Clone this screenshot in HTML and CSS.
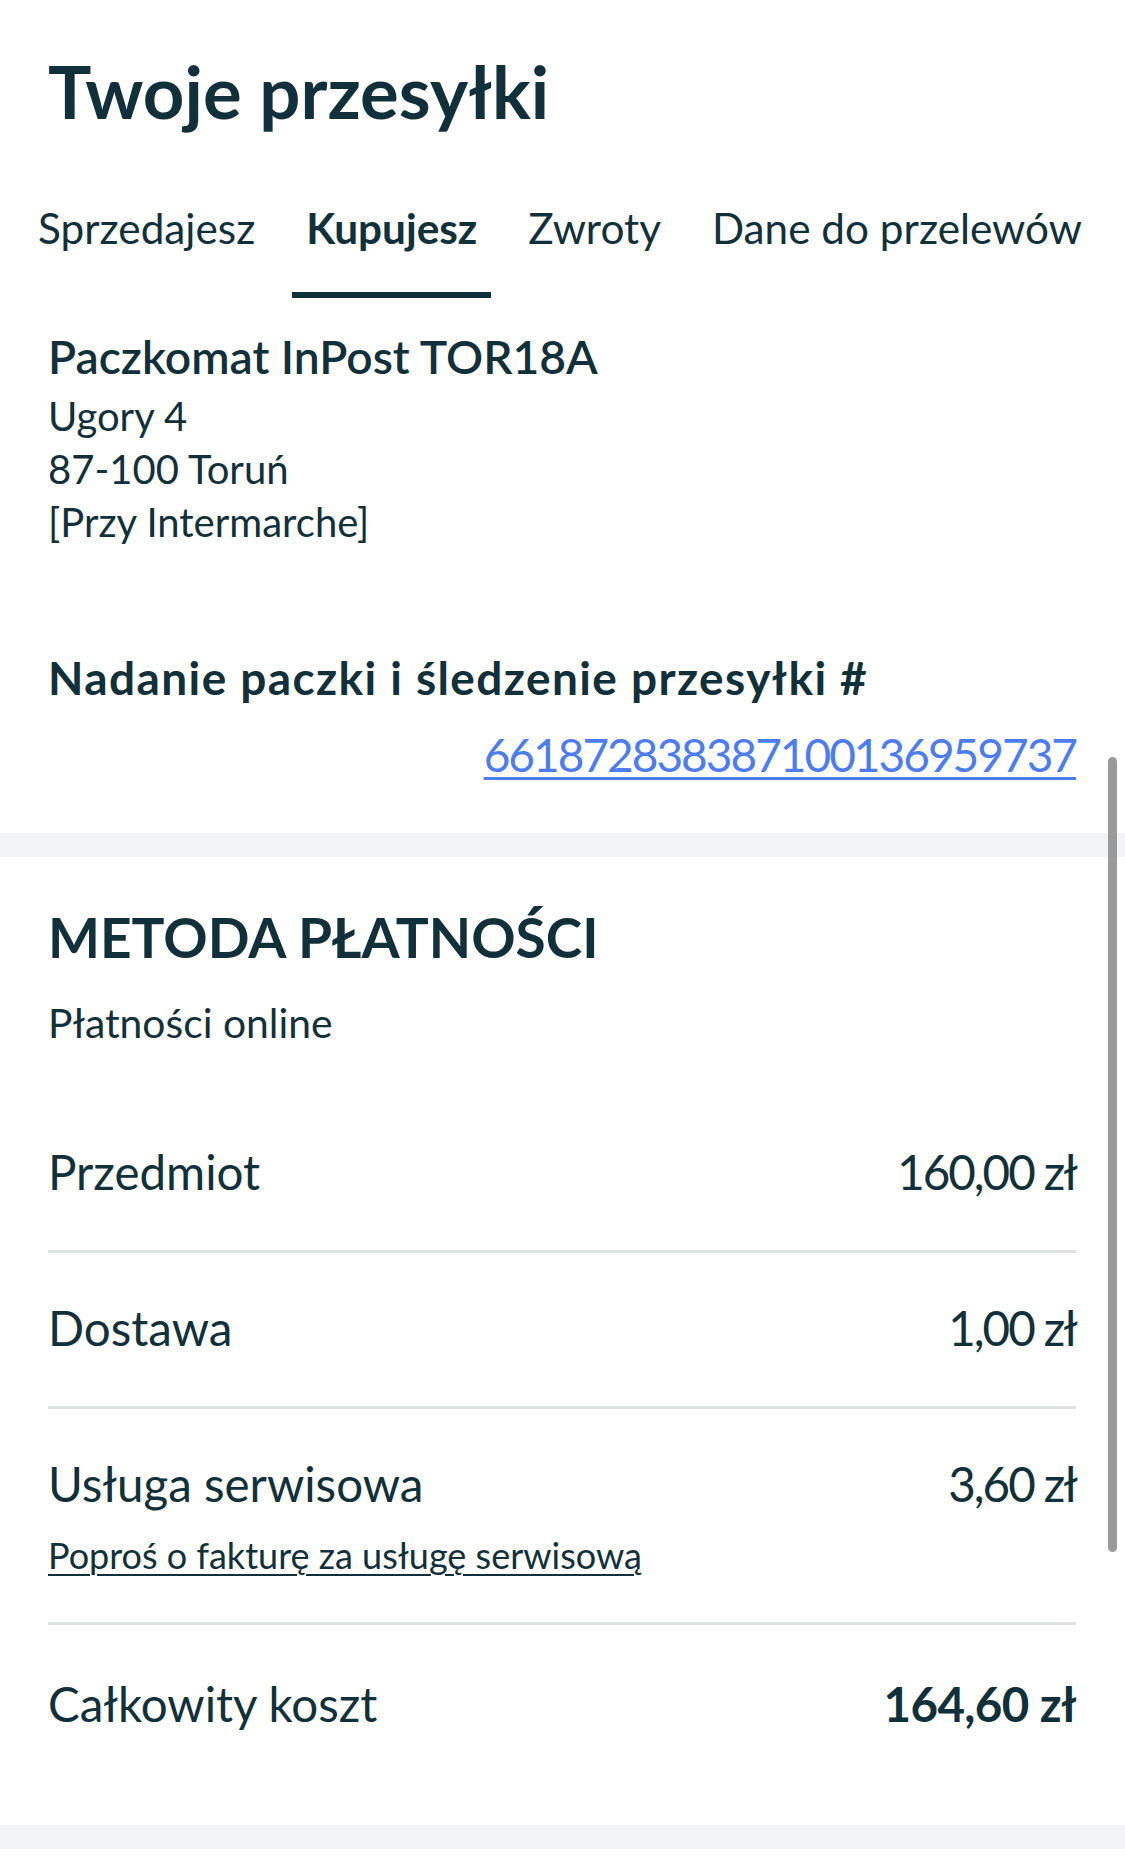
FILE: index.html
```html
<!DOCTYPE html>
<html lang="pl">
<head>
<meta charset="utf-8">
<title>Twoje przesyłki</title>
<link rel="stylesheet" href="styles.css">
</head>
<body>
<div class="screen">
  <header class="header">
    <h1 class="title">Twoje przesyłki</h1>
  </header>
  <nav class="tabs">
    <span class="tab">Sprzedajesz</span>
    <span class="tab tab-active">Kupujesz</span>
    <span class="tab">Zwroty</span>
    <span class="tab">Dane do przelewów</span>
  </nav>

  <section class="section">
    <div class="point-name">Paczkomat InPost TOR18A</div>
    <div class="address">
      <div>Ugory 4</div>
      <div>87-100 Toruń</div>
      <div>[Przy Intermarche]</div>
    </div>
    <div class="tracking-label">Nadanie paczki i śledzenie przesyłki #</div>
    <div class="tracking-row"><a class="tracking-link" href="#">661872838387100136959737</a></div>
  </section>

  <div class="band"></div>

  <section class="section section-pay">
    <h2 class="pay-title">METODA PŁATNOŚCI</h2>
    <div class="pay-method">Płatności online</div>
    <div class="rows">
      <div class="row">
        <div class="row-line"><span>Przedmiot</span><span class="value">160,00 zł</span></div>
      </div>
      <div class="row">
        <div class="row-line"><span>Dostawa</span><span class="value">1,00 zł</span></div>
      </div>
      <div class="row row-invoice">
        <div class="row-line"><span>Usługa serwisowa</span><span class="value">3,60 zł</span></div>
        <a class="invoice-link" href="#">Poproś o fakturę za usługę serwisową</a>
      </div>
      <div class="row row-last">
        <div class="row-line"><span>Całkowity koszt</span><span class="value total">164,60 zł</span></div>
      </div>
    </div>
  </section>

  <div class="band"></div>

  <div class="scrollbar"></div>
</div>
</body>
</html>
```

FILE: styles.css
```css
* {
  box-sizing: border-box;
}

html, body {
  margin: 0;
  padding: 0;
  background: #ffffff;
}

body {
  font-family: Lato, "Noto Sans", "Liberation Sans", sans-serif;
  color: #12303a;
}

.screen {
  position: relative;
  width: 1125px;
  min-height: 1864px;
  overflow: hidden;
}

.header {
  padding: 48px 49px 0 48px;
}

.title {
  margin: 0;
  font-size: 72.5px;
  line-height: 86px;
  font-weight: 700;
}

.tabs {
  display: flex;
  gap: 23px;
  margin-top: 69px;
  padding-left: 24px;
}

.tab {
  font-size: 42.3px;
  line-height: 50px;
  padding: 0 14px 39px;
  border-bottom: 6px solid transparent;
  white-space: nowrap;
}

.tab-active {
  font-weight: 700;
  border-bottom-color: #12303a;
}

.section {
  padding: 30px 49px 50px 48px;
}

.point-name {
  font-size: 46.2px;
  line-height: 56px;
  font-weight: 600;
}

.address {
  margin-top: 6px;
  font-size: 40px;
  line-height: 53px;
}

.tracking-label {
  margin-top: 102px;
  font-size: 46px;
  line-height: 54px;
  font-weight: 700;
  letter-spacing: 1.4px;
}

.tracking-row {
  margin-top: 22px;
  display: flex;
  justify-content: flex-end;
}

.tracking-link {
  font-size: 46px;
  line-height: 56px;
  color: #4d7cee;
  letter-spacing: -2px;
  text-decoration: underline;
  text-decoration-thickness: 3px;
  text-underline-offset: 5px;
}

.band {
  height: 24px;
  background: #f2f3f5;
}

.section-pay {
  padding: 47px 49px 0 48px;
}

.pay-title {
  margin: 0;
  font-size: 55px;
  line-height: 66px;
  font-weight: 700;
}

.pay-method {
  margin-top: 31px;
  font-size: 40.8px;
  line-height: 44px;
}

.rows {
  margin-top: 52px;
}

.row {
  padding: 47px 0 50px;
  border-bottom: 3px solid #dfe2e3;
}

.row-invoice {
  padding-bottom: 46px;
}

.row-last {
  border-bottom: none;
  padding-top: 51px;
  padding-bottom: 93px;
}

.row-line {
  display: flex;
  justify-content: space-between;
  align-items: baseline;
  font-size: 47.5px;
  line-height: 56px;
}

.value {
  letter-spacing: -2px;
}

.total {
  font-weight: 700;
  letter-spacing: -0.6px;
}

.invoice-link {
  display: block;
  margin-top: 22px;
  font-size: 36px;
  line-height: 42px;
  color: #12303a;
  text-decoration: underline;
  text-decoration-thickness: 2px;
  text-underline-offset: 5px;
}

.scrollbar {
  position: absolute;
  left: 1108px;
  top: 757px;
  width: 9px;
  height: 795px;
  border-radius: 5px;
  background: #9a9a9a;
}
```
